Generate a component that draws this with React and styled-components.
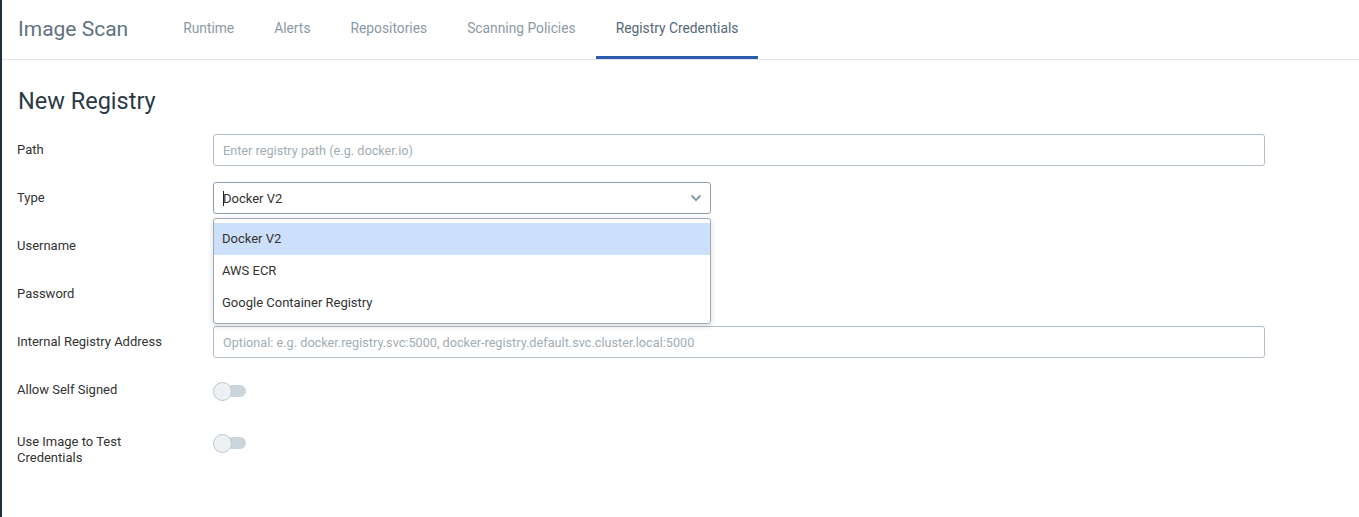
import React from "react";
import styled, { createGlobalStyle } from "styled-components";

const GlobalStyle = createGlobalStyle`
  html, body {
    margin: 0;
    padding: 0;
    background: #fff;
  }
  body {
    font-family: Roboto, "Liberation Sans", sans-serif;
    -webkit-font-smoothing: antialiased;
  }
`;

const Page = styled.div`
  min-height: 100vh;
  border-left: 2px solid #1d2e3d;
  box-sizing: border-box;
`;

const Header = styled.header`
  display: flex;
  align-items: stretch;
  height: 59px;
  border-bottom: 1px solid #dfe5e9;
  padding-left: 16px;
`;

const Brand = styled.div`
  display: flex;
  align-items: center;
  font-size: 21px;
  color: #5e7381;
  margin-right: 35px;
  padding-bottom: 1px;
`;

const Tabs = styled.nav`
  display: flex;
  align-items: stretch;
`;

const Tab = styled.div`
  display: flex;
  align-items: center;
  padding: 0 20px;
  font-size: 13.8px;
  color: ${(p) => (p.$active ? "#56697a" : "#8a9aa6")};
  border-bottom: 3px solid ${(p) => (p.$active ? "#2b5cae" : "transparent")};
  box-sizing: border-box;
`;

const Content = styled.main`
  padding: 28px 0 0 15px;
`;

const Title = styled.h1`
  margin: 0 0 20px 1px;
  font-size: 23.5px;
  line-height: 26px;
  font-weight: 400;
  color: #2b3a47;
`;

const Form = styled.div`
  max-width: 1248px;
`;

const Row = styled.div`
  display: flex;
  align-items: ${(p) => (p.$toggle ? "flex-start" : "center")};
  min-height: 32px;
  height: ${(p) => (p.$toggle ? "52px" : "auto")};
  padding-top: ${(p) => (p.$toggle ? "8px" : "0")};
  margin-bottom: ${(p) => (p.$toggle ? "0" : "16px")};
  box-sizing: border-box;
`;

const Label = styled.label`
  flex: 0 0 196px;
  box-sizing: border-box;
  padding-right: 46px;
  font-size: 13px;
  line-height: 16px;
  color: #333;
`;

const TextInput = styled.input`
  flex: ${(p) => (p.$short ? "0 0 498px" : "1")};
  height: 32px;
  box-sizing: border-box;
  border: 1px solid #b3bfc8;
  border-radius: 3px;
  padding: 0 9px;
  font-family: inherit;
  font-size: 12.7px;
  color: #333;
  outline: none;
  &::placeholder {
    color: #a2adb5;
  }
`;

const SelectWrap = styled.div`
  position: relative;
  flex: 0 0 498px;
`;

const SelectBox = styled.div`
  display: flex;
  align-items: center;
  justify-content: space-between;
  height: 32px;
  box-sizing: border-box;
  border: 1px solid #8c9daa;
  border-radius: 3px;
  padding: 0 8px 0 9px;
  font-size: 13px;
  color: #333;
`;

const Value = styled.span`
  display: flex;
  align-items: center;
`;

const Caret = styled.span`
  width: 1px;
  height: 15px;
  background: #222;
  margin-right: -1px;
`;

const Menu = styled.ul`
  position: absolute;
  top: 36px;
  left: 0;
  right: 0;
  margin: 0;
  padding: 4px 0 4px;
  list-style: none;
  background: #fff;
  border: 1px solid #9eabb5;
  border-radius: 3px;
  box-shadow: 0 2px 6px rgba(0, 0, 0, 0.15);
  z-index: 10;
`;

const Option = styled.li`
  height: 32px;
  line-height: 32px;
  padding-left: 8px;
  font-size: 13px;
  color: #333;
  background: ${(p) => (p.$selected ? "#cce0fb" : "transparent")};
`;

const Toggle = styled.div`
  position: relative;
  width: 33px;
  height: 19px;
`;

const Track = styled.div`
  position: absolute;
  left: 13px;
  top: 3px;
  width: 20px;
  height: 12px;
  border-radius: 6px;
  background: #cbd5dc;
`;

const Knob = styled.div`
  position: absolute;
  left: 0;
  top: 0;
  width: 19px;
  height: 19px;
  box-sizing: border-box;
  border-radius: 50%;
  border: 1px solid #bcc8d0;
  background: #eef1f4;
`;

const Chevron = () => (
  <svg width="12" height="8" viewBox="0 0 12 8">
    <polyline
      points="1.5,1.5 6,6 10.5,1.5"
      fill="none"
      stroke="#8c9daa"
      strokeWidth="2"
    />
  </svg>
);

const tabs = [
  "Runtime",
  "Alerts",
  "Repositories",
  "Scanning Policies",
  "Registry Credentials",
];

const types = ["Docker V2", "AWS ECR", "Google Container Registry"];

export default function App() {
  return (
    <Page>
      <GlobalStyle />
      <Header>
        <Brand>Image Scan</Brand>
        <Tabs>
          {tabs.map((t) => (
            <Tab key={t} $active={t === "Registry Credentials"}>
              {t}
            </Tab>
          ))}
        </Tabs>
      </Header>
      <Content>
        <Title>New Registry</Title>
        <Form>
          <Row>
            <Label>Path</Label>
            <TextInput placeholder="Enter registry path (e.g. docker.io)" />
          </Row>
          <Row>
            <Label>Type</Label>
            <SelectWrap>
              <SelectBox>
                <Value>
                  <Caret />
                  Docker V2
                </Value>
                <Chevron />
              </SelectBox>
              <Menu>
                {types.map((t, i) => (
                  <Option key={t} $selected={i === 0}>
                    {t}
                  </Option>
                ))}
              </Menu>
            </SelectWrap>
          </Row>
          <Row>
            <Label>Username</Label>
            <TextInput $short />
          </Row>
          <Row>
            <Label>Password</Label>
            <TextInput $short type="password" />
          </Row>
          <Row>
            <Label>Internal Registry Address</Label>
            <TextInput placeholder="Optional: e.g. docker.registry.svc:5000, docker-registry.default.svc.cluster.local:5000" />
          </Row>
          <Row $toggle>
            <Label>Allow Self Signed</Label>
            <Toggle>
              <Track />
              <Knob />
            </Toggle>
          </Row>
          <Row $toggle>
            <Label>Use Image to Test Credentials</Label>
            <Toggle>
              <Track />
              <Knob />
            </Toggle>
          </Row>
        </Form>
      </Content>
    </Page>
  );
}
